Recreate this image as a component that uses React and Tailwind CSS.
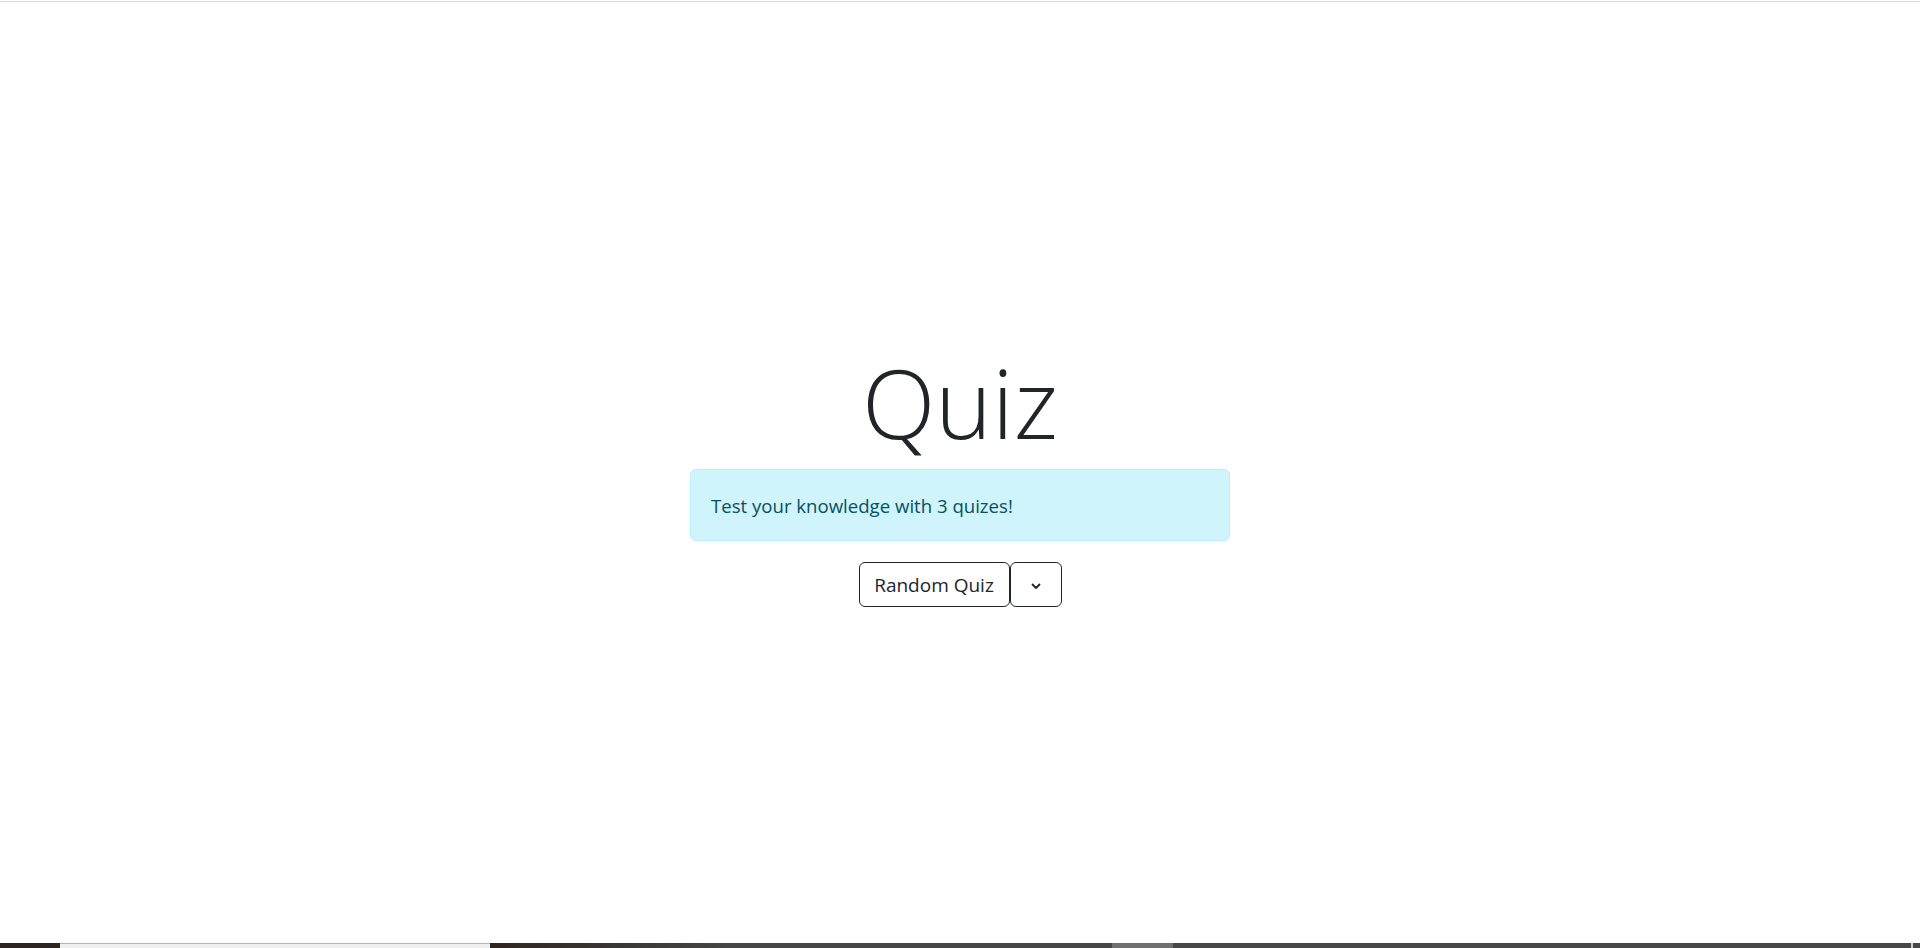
export default function App() {
  return (
    <div
      className="relative h-[948px] w-full bg-white flex flex-col items-center justify-center text-[#212529]"
      style={{ fontFamily: '"Open Sans", "Noto Sans", sans-serif' }}
    >
      <div className="absolute top-0 left-0 right-0 h-[2px] border-b border-[#dcdcdc]" />
      <h1 className="mt-[3px] text-[96px] leading-[1.2] font-light m-0">Quiz</h1>
      <div className="mt-[9px] w-[540px] h-[72px] flex items-center px-[20px] pt-[2px] rounded-[6px] border border-[#b6effb] bg-[#cff4fc] text-[#055160] text-[18.6px]">
        Test your knowledge with 3 quizes!
      </div>
      <div className="mt-[21px] flex">
        <button className="h-[45px] w-[151px] pt-[2px] rounded-[6px] border border-[#212529] bg-white text-[19px] text-[#212529] flex items-center justify-center">
          Random Quiz
        </button>
        <button className="h-[45px] w-[52px] pt-[5px] rounded-[6px] border border-[#212529] bg-white flex items-center justify-center">
          <svg width="10" height="7" viewBox="0 0 10 7" fill="none">
            <path d="M1.5 1.5 L5 5 L8.5 1.5" stroke="#212529" strokeWidth="1.8" strokeLinecap="round" strokeLinejoin="round" />
          </svg>
        </button>
      </div>
      <div className="absolute bottom-0 left-0 right-0 h-[5px] flex">
        <div className="w-[60px] bg-[#2b2420]" />
        <div className="w-[430px] bg-[#efefef] border-t border-[#b5b5b5]" />
        <div className="w-[240px] bg-gradient-to-r from-[#2e2520] to-[#464646]" />
        <div className="w-[382px] bg-[#464646]" />
        <div className="w-[61px] bg-[#6f6f6f]" />
        <div className="flex-1 bg-[#474747]" />
        <div className="w-[2px] bg-[#cfcfcf]" />
        <div className="w-[7px] bg-[#474747]" />
      </div>
    </div>
  );
}
